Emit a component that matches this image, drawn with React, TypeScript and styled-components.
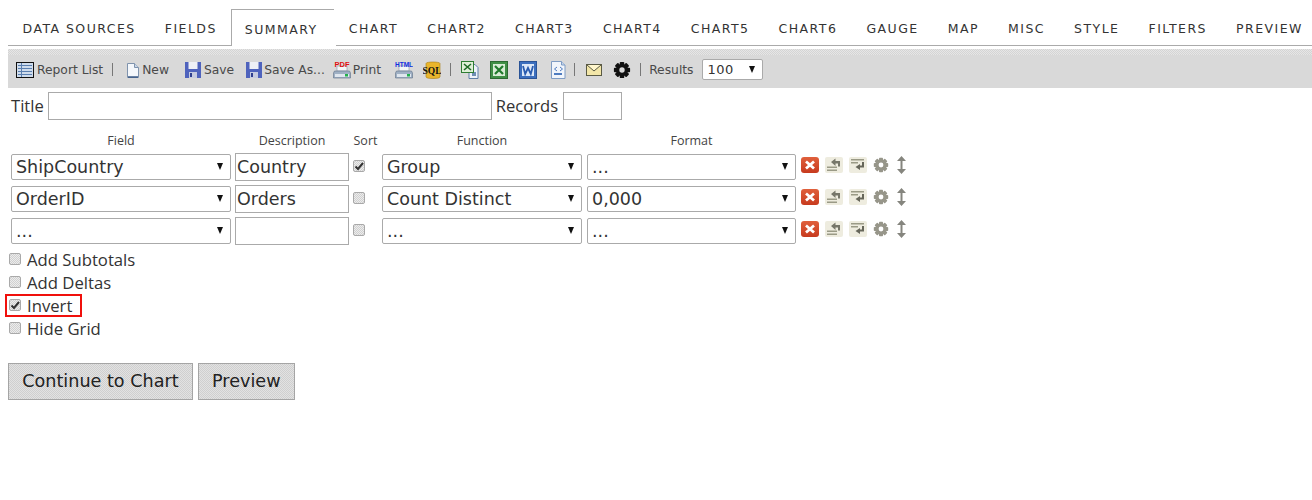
import { Fragment, ReactElement, ReactNode } from 'react';
import styled, { createGlobalStyle } from 'styled-components';

const TABS = ['DATA SOURCES', 'FIELDS', 'SUMMARY', 'CHART', 'CHART2', 'CHART3', 'CHART4', 'CHART5', 'CHART6', 'GAUGE', 'MAP', 'MISC', 'STYLE', 'FILTERS', 'PREVIEW'];

interface RowData {
  field: string;
  description: string;
  sorted: boolean;
  func: string;
  format: string;
}

const ROWS: RowData[] = [
  { field: 'ShipCountry', description: 'Country', sorted: true, func: 'Group', format: '...' },
  { field: 'OrderID', description: 'Orders', sorted: false, func: 'Count Distinct', format: '0,000' },
  { field: '...', description: '', sorted: false, func: '...', format: '...' },
];

const GlobalStyle = createGlobalStyle`
  html, body {
    margin: 0;
    padding: 0;
    background: #fff;
    overflow: hidden;
  }
  body {
    font-family: "Open Sans", "Liberation Sans", sans-serif;
    color: #333;
  }
`;

const Icon18 = styled.svg`
  width: 18px;
  height: 20px;
  flex: none;
  display: block;
`;

function ListIcon(): ReactElement {
  return (
    <Icon18 viewBox="0 0 18 20">
      <rect x=".5" y="2.500" width="17" height="15" fill="#cfdcec" stroke="#111" />
      <path d="M2 5.500h14M2 8.500h14M2 11.500h14M2 14.500h14" stroke="#5a7fb0" />
      <path d="M5.500 3v14" stroke="#5a7fb0" />
    </Icon18>
  );
}

function PageIcon(): ReactElement {
  return (
    <Icon18 viewBox="0 0 18 20">
      <path d="M3.500 3.500h7l4 4v10h-11z" fill="#f4f7fb" stroke="#7f93ad" />
      <path d="M10.500 3.500v4h4" fill="#c8d6e8" stroke="#7f93ad" />
      <path d="M4 17h10" stroke="#2f4f7f" strokeWidth="1.400" />
    </Icon18>
  );
}

function DiskIcon(): ReactElement {
  return (
    <Icon18 viewBox="0 0 18 20">
      <path d="M1 2h16v16H1z" fill="#4f63bd" />
      <rect x="4.500" y="2" width="9" height="7" fill="#eef0f6" />
      <rect x="5" y="12" width="8" height="6" fill="#c5cbe0" />
      <rect x="6" y="13" width="2" height="4" fill="#2f3f8f" />
    </Icon18>
  );
}

const PrinterLabel = styled.text<{ $size: number }>`
  font-family: "Liberation Sans", sans-serif;
  font-size: ${(p) => p.$size}px;
  font-weight: 700;
`;

function PrinterIcon({ label, color, size }: { label: string; color: string; size: number }): ReactElement {
  return (
    <Icon18 viewBox="0 0 18 20">
      <rect x="4" y="6" width="10" height="5" fill="#f4f6f8" stroke="#8a98a8" strokeWidth=".6" />
      <path d="M1.500 11h15l1 2v5h-17v-5z" fill="#9fb0c4" stroke="#5e7186" strokeWidth=".6" />
      <rect x="2" y="14" width="14" height="3" fill="#dfe6ee" />
      <rect x="12" y="14" width="3" height="2.500" fill="#22b14c" />
      <PrinterLabel $size={size} x="9" y="6.500" textAnchor="middle" fill={color}>{label}</PrinterLabel>
    </Icon18>
  );
}

const SqlLabel = styled.text`
  font-family: "Liberation Serif", serif;
  font-size: 9.500px;
  font-weight: 700;
  fill: #111;
`;

function SqlIcon(): ReactElement {
  return (
    <Icon18 viewBox="0 0 18 20">
      <path d="M3 3.500C3 1.500 17 1.500 17 3.500V17C17 19 3 19 3 17z" fill="#e9b52c" stroke="#a97c10" strokeWidth=".6" />
      <SqlLabel x="9" y="13.500" textAnchor="middle">SQL</SqlLabel>
    </Icon18>
  );
}

function ExcelDocIcon(): ReactElement {
  return (
    <Icon18 viewBox="0 0 18 20">
      <path d="M8 4.500h6l3 3v11H8z" fill="#eef3fa" stroke="#5f7fa8" />
      <rect x="11" y="12" width="4" height="4" fill="#6f8fb5" />
      <rect x=".5" y="1.500" width="12" height="11" fill="#dff0d8" stroke="#2e7d32" />
      <path d="M3 4l7 6M10 4l-7 6" stroke="#1e6b25" strokeWidth="1.600" />
    </Icon18>
  );
}

function ExcelIcon(): ReactElement {
  return (
    <Icon18 viewBox="0 0 18 20">
      <rect x=".5" y="1.500" width="17" height="17" fill="#3f8f45" stroke="#2c6a31" />
      <rect x="3" y="4" width="12" height="12" fill="#d8ecd5" />
      <path d="M5 6l8 8M13 6l-8 8" stroke="#1f7a2a" strokeWidth="2.200" />
    </Icon18>
  );
}

function WordIcon(): ReactElement {
  return (
    <Icon18 viewBox="0 0 18 20">
      <rect x=".5" y="1.500" width="17" height="17" fill="#3c6fbe" stroke="#2a5396" />
      <rect x="3" y="4" width="12" height="12" fill="#dce8f8" />
      <path d="M4 6l2.200 8L9 8l2.800 6L14 6" fill="none" stroke="#2a5cb0" strokeWidth="1.800" />
    </Icon18>
  );
}

function XmlDocIcon(): ReactElement {
  return (
    <Icon18 viewBox="0 0 18 20">
      <path d="M1.500 1.500h10l3.500 3.500v13.500H1.500z" fill="#f1f5fb" stroke="#7f9cc4" />
      <path d="M11.500 1.500V5H15" fill="#c8d8ee" stroke="#7f9cc4" />
      <path d="M7 7L4.500 9 7 11M10 7l2.500 2L10 11" fill="none" stroke="#4f7cc0" />
      <path d="M4 14h8" stroke="#4f7cc0" strokeWidth="2" />
    </Icon18>
  );
}

function MailIcon(): ReactElement {
  return (
    <Icon18 viewBox="0 0 18 20">
      <rect x="1.500" y="4.500" width="15" height="11" fill="#f2e6a8" stroke="#5a5a44" />
      <path d="M2 5l7 6 7-6" fill="#fff6cc" stroke="#5a5a44" />
    </Icon18>
  );
}

function GearShape({ fill, hole }: { fill: string; hole: string }): ReactElement {
  const teeth = [0, 45, 90, 135];
  return (
    <>
      {teeth.map((deg) => (
        <rect key={deg} x="7.500" y="1" width="5" height="18" rx="1" fill={fill} transform={`rotate(${deg} 10 10)`} />
      ))}
      <circle cx="10" cy="10" r="6.500" fill={fill} />
      <circle cx="10" cy="10" r="3" fill={hole} />
    </>
  );
}

function BlackGearIcon(): ReactElement {
  return (
    <Icon18 viewBox="0 0 20 20">
      <GearShape fill="#111" hole="#d9d9d9" />
    </Icon18>
  );
}

const ActionIcon = styled.svg<{ $width?: number }>`
  width: ${(p) => p.$width ?? 18}px;
  height: 18px;
  flex: none;
  display: block;
`;

function DeleteIcon(): ReactElement {
  return (
    <ActionIcon viewBox="0 0 18 18">
      <defs>
        <linearGradient id="deleteFill" x1="0" y1="0" x2="0" y2="1">
          <stop offset="0" stopColor="#e0603c" />
          <stop offset="1" stopColor="#c73a1e" />
        </linearGradient>
      </defs>
      <rect x="0" y="1" width="18" height="16" rx="3" fill="url(#deleteFill)" />
      <path d="M5 5.500l8 7M13 5.500l-8 7" stroke="#fff" strokeWidth="2.800" />
    </ActionIcon>
  );
}

function MoveUpIcon(): ReactElement {
  return (
    <ActionIcon viewBox="0 0 18 18">
      <rect x="0" y="1" width="18" height="16" rx="2" fill="#eeecdf" />
      <path d="M2 10.500h10V12H2zM2 13.500h10V15H2z" fill="#9a9a86" />
      <path d="M6 6l4.500-3.500V5H15v5.500h-2V7.500h-2.500V10z" fill="#77776a" />
    </ActionIcon>
  );
}

function MoveDownIcon(): ReactElement {
  return (
    <ActionIcon viewBox="0 0 18 18">
      <rect x="0" y="1" width="18" height="16" rx="2" fill="#eeecdf" />
      <path d="M2 3h13v1.500H2zM2 6h7v1.500H2z" fill="#9a9a86" />
      <path d="M15 6v5.500H11V14L6.500 11 11 8v1.500h2V6z" fill="#66665a" />
    </ActionIcon>
  );
}

function SoftGearIcon(): ReactElement {
  return (
    <ActionIcon $width={16} viewBox="0 0 20 22">
      <g transform="translate(0 1)">
        <GearShape fill="#97968a" hole="#fff" />
      </g>
    </ActionIcon>
  );
}

function ResizeIcon(): ReactElement {
  return (
    <ActionIcon $width={13} viewBox="0 0 13 18">
      <path d="M6.500 0l4.500 5H7.500v8H11l-4.500 5L2 13h3.500V5H2z" fill="#85857e" />
    </ActionIcon>
  );
}

const Page = styled.div`
  padding-top: 9px;
  width: 1312px;
  height: 491px;
  box-sizing: border-box;
  overflow: hidden;
`;

const TabBar = styled.div`
  display: flex;
  margin-left: 8px;
  height: 36px;
  border-bottom: 1px solid #aaa;
  white-space: nowrap;
`;

const Tab = styled.div<{ $active?: boolean }>`
  flex: none;
  height: ${(p) => (p.$active ? '37px' : '36px')};
  box-sizing: border-box;
  padding: ${(p) => (p.$active ? '12px 18px 0 13px' : '12px 14.550px 0')};
  margin-left: ${(p) => (p.$active ? '-.5px' : '0')};
  margin-right: ${(p) => (p.$active ? '-2.500px' : '0')};
  background: #fff;
  border: ${(p) => (p.$active ? '1px solid #aaa' : '0 none')};
  border-bottom: 0 none;
  font-family: "DejaVu Sans", sans-serif;
  font-size: 12.500px;
  line-height: 16px;
  letter-spacing: 1.450px;
  color: #333;
`;

const Toolbar = styled.div`
  display: flex;
  align-items: center;
  margin: 3px 0 0 8px;
  height: 39px;
  padding: 2px 0 0 8px;
  box-sizing: border-box;
  background:
    linear-gradient(#d9d9d9, #d9d9d9) 0 6px / 100% 100% no-repeat,
    repeating-conic-gradient(#d4d4d4 0 25%, #e6e6e6 0 50%) 0 0 / 2px 2px;
  font-family: "DejaVu Sans", sans-serif;
  font-size: 12.300px;
  color: #4a4a4a;
  white-space: nowrap;
`;

const ToolItem = styled.span<{ $gap?: number }>`
  display: flex;
  align-items: center;
  flex: none;
  margin-right: ${(p) => p.$gap ?? 0}px;
`;

const ToolLabel = styled.span<{ $left?: number }>`
  margin-left: ${(p) => p.$left ?? 2}px;
`;

const Separator = styled.span<{ $left: number; $right: number }>`
  flex: none;
  width: 1px;
  height: 13px;
  background: #777;
  margin: 0 ${(p) => p.$right}px 0 ${(p) => p.$left}px;
`;

const SelectBox = styled.div<{ $width: number; $height?: number; $size?: number }>`
  position: relative;
  flex: none;
  width: ${(p) => p.$width}px;
  height: ${(p) => p.$height ?? 26}px;
  box-sizing: border-box;
  padding-left: 4px;
  background: #fff;
  border: 1px solid #aaa;
  border-radius: 2px;
  font-family: "DejaVu Sans", sans-serif;
  font-size: ${(p) => p.$size ?? 17.5}px;
  line-height: ${(p) => (p.$height ?? 26) - 2}px;
  color: #333;
  white-space: nowrap;
`;

const Arrow = styled.i`
  position: absolute;
  right: 7px;
  top: 50%;
  margin-top: -4px;
  width: 0;
  height: 0;
  border-left: 3.500px solid transparent;
  border-right: 3.500px solid transparent;
  border-top: 7px solid #111;
`;

const ResultsBox = styled(SelectBox)`
  margin-left: 8px;
  padding-left: 5px;
  letter-spacing: .5px;
`;

const TitleRow = styled.div`
  display: flex;
  align-items: center;
  margin: 4px 0 0 11px;
  height: 28px;
  font-size: 16.600px;
`;

const TitleLabel = styled.span`
  margin-top: -2px;
`;

const TextBox = styled.div<{ $width: number; $height?: number; $size?: number }>`
  flex: none;
  width: ${(p) => p.$width}px;
  height: ${(p) => p.$height ?? 28}px;
  box-sizing: border-box;
  padding-left: 1px;
  background: #fff;
  border: 1px solid #aaa;
  font-family: "DejaVu Sans", sans-serif;
  font-size: ${(p) => p.$size ?? 17.5}px;
  line-height: ${(p) => (p.$height ?? 28) - 2}px;
  color: #333;
`;

const TitleBox = styled(TextBox)`
  margin: 0 4px;
`;

const RecordsBox = styled(TextBox)`
  margin-left: 5px;
`;

const FieldGrid = styled.div`
  display: grid;
  grid-template-columns: 224px 114px 33px 205px 214px auto;
  row-gap: 4px;
  margin: 12px 0 0 11px;
  justify-content: start;
  align-items: center;
`;

const HeaderCell = styled.div<{ $trim?: number }>`
  height: 18px;
  padding-right: ${(p) => p.$trim ?? 0}px;
  margin-bottom: -1px;
  text-align: center;
  font-size: 12.500px;
  line-height: 18px;
  color: #444;
`;

const SortCell = styled.div`
  display: flex;
  padding-left: 4px;
`;

const Actions = styled.div`
  display: flex;
  align-items: center;
  gap: 6px;
  margin-top: -5px;
`;

const Check = styled.span`
  display: flex;
  align-items: center;
  justify-content: center;
  flex: none;
  width: 12px;
  height: 12px;
  box-sizing: border-box;
  margin-top: -2px;
  border: 1px solid #a9a9a9;
  border-radius: 2px;
  background: repeating-conic-gradient(#d0d0d0 0 25%, #ececec 0 50%) 0 0 / 2px 2px;
`;

const CheckMark = styled.svg`
  width: 10px;
  height: 10px;
  display: block;
`;

function CheckBox({ checked }: { checked?: boolean }): ReactElement {
  return (
    <Check>
      {checked && (
        <CheckMark viewBox="0 0 10 10">
          <path d="M1.500 5.500L4 8l5-6" fill="none" stroke="#333" strokeWidth="2" />
        </CheckMark>
      )}
    </Check>
  );
}

const Options = styled.div`
  margin: 3px 0 0 9px;
  display: flex;
  flex-direction: column;
  align-items: flex-start;
`;

const OptionRow = styled.div`
  position: relative;
  display: flex;
  align-items: center;
  gap: 6px;
  height: 23px;
  font-size: 16.700px;
  color: #333;
`;

const Highlight = styled.span`
  position: absolute;
  left: -4px;
  top: 0;
  width: 77px;
  height: 23px;
  box-sizing: border-box;
  border: 2px solid #f0100c;
`;

const Buttons = styled.div`
  display: flex;
  gap: 5px;
  margin: 23px 0 0 8px;
`;

const Button = styled.div`
  height: 37px;
  box-sizing: border-box;
  padding: 0 13.250px;
  border: 1px solid #a5a5a5;
  background: repeating-conic-gradient(#cfcfcf 0 25%, #e2e2e2 0 50%) 0 0 / 2px 2px;
  font-family: "DejaVu Sans", sans-serif;
  font-size: 17.600px;
  line-height: 35px;
  color: #222;
`;

function Select({ width, children }: { width: number; children: ReactNode }): ReactElement {
  return (
    <SelectBox $width={width}>
      {children}
      <Arrow />
    </SelectBox>
  );
}

export default function App(): ReactElement {
  return (
    <Page>
      <GlobalStyle />
      <TabBar>
        {TABS.map((tab) => (
          <Tab key={tab} $active={tab === 'SUMMARY'}>{tab}</Tab>
        ))}
      </TabBar>
      <Toolbar>
        <ToolItem><ListIcon /><ToolLabel $left={3}>Report List</ToolLabel></ToolItem>
        <Separator $left={9} $right={11} />
        <ToolItem $gap={15}><PageIcon /><ToolLabel $left={0}>New</ToolLabel></ToolItem>
        <ToolItem $gap={11}><DiskIcon /><ToolLabel>Save</ToolLabel></ToolItem>
        <ToolItem $gap={8}><DiskIcon /><ToolLabel $left={1}>Save As...</ToolLabel></ToolItem>
        <ToolItem $gap={14}><PrinterIcon label="PDF" color="#e01010" size={7.5} /><ToolLabel>Print</ToolLabel></ToolItem>
        <ToolItem $gap={10}><PrinterIcon label="HTML" color="#1030e0" size={6.5} /></ToolItem>
        <ToolItem><SqlIcon /></ToolItem>
        <Separator $left={9} $right={10} />
        <ToolItem $gap={11}><ExcelDocIcon /></ToolItem>
        <ToolItem $gap={11}><ExcelIcon /></ToolItem>
        <ToolItem $gap={13}><WordIcon /></ToolItem>
        <ToolItem><XmlDocIcon /></ToolItem>
        <Separator $left={6} $right={10} />
        <ToolItem $gap={10}><MailIcon /></ToolItem>
        <ToolItem><BlackGearIcon /></ToolItem>
        <Separator $left={9} $right={6} />
        <ToolItem><ToolLabel>Results</ToolLabel></ToolItem>
        <ResultsBox $width={61} $height={21} $size={13}>100<Arrow /></ResultsBox>
      </Toolbar>
      <TitleRow>
        <TitleLabel>Title</TitleLabel>
        <TitleBox $width={444} />
        <TitleLabel>Records</TitleLabel>
        <RecordsBox $width={59} />
      </TitleRow>
      <FieldGrid>
        <HeaderCell $trim={4}>Field</HeaderCell>
        <HeaderCell>Description</HeaderCell>
        <HeaderCell>Sort</HeaderCell>
        <HeaderCell $trim={5}>Function</HeaderCell>
        <HeaderCell $trim={5}>Format</HeaderCell>
        <span />
        {ROWS.map((row) => (
          <Fragment key={row.field}>
            <Select width={220}>{row.field}</Select>
            <TextBox $width={114}>{row.description}</TextBox>
            <SortCell><CheckBox checked={row.sorted} /></SortCell>
            <Select width={200}>{row.func}</Select>
            <Select width={209}>{row.format}</Select>
            <Actions>
              <DeleteIcon />
              <MoveUpIcon />
              <MoveDownIcon />
              <SoftGearIcon />
              <ResizeIcon />
            </Actions>
          </Fragment>
        ))}
      </FieldGrid>
      <Options>
        <OptionRow><CheckBox />Add Subtotals</OptionRow>
        <OptionRow><CheckBox />Add Deltas</OptionRow>
        <OptionRow><CheckBox checked />Invert<Highlight /></OptionRow>
        <OptionRow><CheckBox />Hide Grid</OptionRow>
      </Options>
      <Buttons>
        <Button>Continue to Chart</Button>
        <Button>Preview</Button>
      </Buttons>
    </Page>
  );
}
